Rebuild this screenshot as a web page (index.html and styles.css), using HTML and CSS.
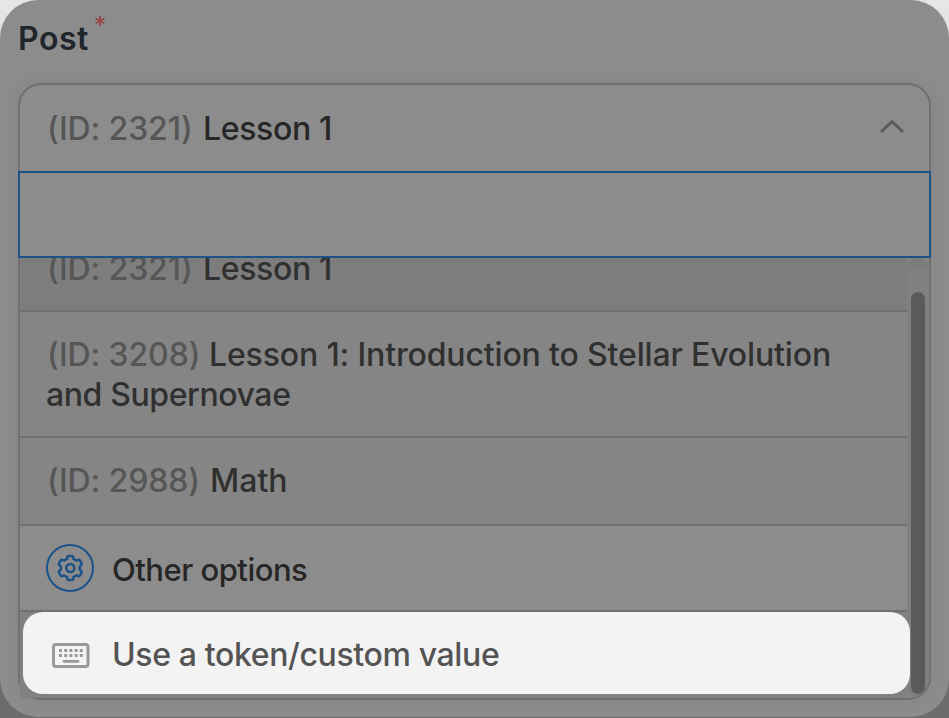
FILE: index.html
```
<!DOCTYPE html>
<html lang="en">
<head>
  <meta charset="UTF-8">
  <title>Post</title>
  <link rel="stylesheet" href="styles.css">
</head>
<body>
  <div class="panel">
    <div class="field-label"><span class="label-text">Post</span><span class="required">*</span></div>

    <div class="select">
      <div class="select-value">
        <div><span class="post-id">(ID: 2321)</span><span class="post-name lesson">Lesson 1</span></div>
        <svg class="chevron" width="24" height="14" viewBox="0 0 24 14">
          <path d="M2 12 12 2.5 22 12" fill="none" stroke="currentColor" stroke-width="3" stroke-linecap="round" stroke-linejoin="round"/>
        </svg>
      </div>

      <input class="search" type="text">

      <div class="dropdown">
        <div class="options">
          <div class="option selected">
            <div><span class="post-id">(ID: 2321)</span><span class="post-name lesson">Lesson 1</span></div>
          </div>
          <div class="option long">
            <div><span class="post-id wide">(ID: 3208)</span><span class="post-name intro">Lesson 1: Introduction to Stellar Evolution</span></div>
            <div><span class="post-name second-line">and Supernovae</span></div>
          </div>
          <div class="option">
            <div><span class="post-id wide">(ID: 2988)</span><span class="post-name math">Math</span></div>
          </div>
          <div class="option other">
            <svg class="gear" width="48" height="48" viewBox="0 0 48 48" fill="none" stroke="currentColor">
              <circle cx="24" cy="24" r="23" stroke-width="2"/>
              <g transform="translate(24.3 24)" stroke-width="2.5" stroke-linejoin="round">
                <circle r="4"/>
                <path d="M-1.6-12H1.6Q2.7-12 2.9-11L3.3-9Q4.8-8.5 6.1-7.4L8.2-8.1Q9.2-8.4 9.8-7.4L11.3-4.7Q11.8-3.7 11-3L9.4-1.6Q9.7 0 9.4 1.6L11 3Q11.8 3.7 11.3 4.7L9.8 7.4Q9.2 8.4 8.2 8.1L6.1 7.4Q4.8 8.5 3.3 9L2.9 11Q2.7 12 1.6 12H-1.6Q-2.7 12-2.9 11L-3.3 9Q-4.8 8.5-6.1 7.4L-8.2 8.1Q-9.2 8.4-9.8 7.4L-11.3 4.7Q-11.8 3.7-11 3L-9.4 1.6Q-9.7 0-9.4-1.6L-11-3Q-11.8-3.7-11.3-4.7L-9.8-7.4Q-9.2-8.4-8.2-8.1L-6.1-7.4Q-4.8-8.5-3.3-9L-2.9-11Q-2.7-12-1.6-12Z"/>
              </g>
            </svg>
            <span class="other-text">Other options</span>
          </div>
          <div class="token-wrap">
            <div class="token">
              <svg class="keyboard" width="38" height="26" viewBox="0 0 38 26">
                <rect x="1.5" y="1.5" width="34.5" height="22" rx="2.5" fill="none" stroke="currentColor" stroke-width="3"/>
                <path d="M7 7.5h24M7 12.5h24" fill="none" stroke="currentColor" stroke-width="3" stroke-dasharray="3 2.2"/>
                <path d="M12 18.3h14" stroke="currentColor" stroke-width="2.8" stroke-linecap="round"/>
              </svg>
              <span class="token-text">Use a token/custom value</span>
            </div>
          </div>
        </div>
        <div class="scrollbar"><div class="track"><div class="thumb"></div></div></div>
      </div>
    </div>
  </div>
</body>
</html>
```
FILE: styles.css
```
* {
  box-sizing: border-box;
}

body {
  margin: 0;
  height: 718px;
  overflow: hidden;
  background: linear-gradient(#e6e6e6 0, #e0e0e0 60px, #6c6c6c 640px, #6c6c6c);
  font-family: Inter, "Liberation Sans", sans-serif;
  font-size: 32px;
  font-weight: 450;
  line-height: 40px;
  color: #262626;
}

.panel {
  height: 717px;
  padding: 18px 18px 0;
  background: #8c8c8c;
  border-radius: 38px;
}

.field-label {
  display: flex;
  height: 65px;
  padding-top: 1px;
  color: #20262c;
  font-weight: 600;
}

.label-text {
  width: 76px;
  letter-spacing: 0.5px;
}

.required {
  margin-top: -13px;
  font-size: 24px;
  font-weight: 400;
  color: #983e3e;
}

.select {
  height: 617px;
  border: 2px solid #707070;
  border-radius: 23px;
  box-shadow: 0 0 18px rgba(0, 0, 0, 0.06);
}

.select-value {
  display: flex;
  justify-content: space-between;
  height: 86px;
  padding: 24px 25px 0 27px;
}

.chevron {
  margin-top: 10px;
  color: #5a5a5a;
}

.post-id {
  display: inline-block;
  width: 156px;
  letter-spacing: -0.1px;
  color: #565656;
}

.post-id.wide {
  width: 162px;
}

.post-name {
  color: #303030;
}

.lesson {
  letter-spacing: -0.35px;
}

.select-value .post-name {
  color: #262626;
}

.search {
  display: block;
  width: 913px;
  height: 87px;
  margin: 0 -2px;
  padding: 0 28px;
  border: 2px solid #1c5288;
  background: #8c8c8c;
  outline: none;
}

.dropdown {
  display: flex;
  height: 440px;
  border-radius: 0 0 21px 0;
  overflow: hidden;
}

.options {
  width: 887px;
  background: #818181;
}

.option {
  height: 88px;
  padding: 23px 0 0 27px;
  border-bottom: 2px solid #707070;
  background: #858585;
  white-space: nowrap;
}

.option.selected {
  height: 54px;
  padding-top: 0;
  background: #7d7d7d;
  overflow: hidden;
}

.option.selected div {
  margin-top: -9px;
}

.option.long {
  height: 126px;
}

.intro {
  letter-spacing: -0.15px;
}

.second-line {
  margin-left: -1px;
  letter-spacing: -0.4px;
}

.math {
  margin-left: 1px;
}

.option.other {
  display: flex;
  height: 86px;
  padding: 18px 0 0 26px;
  background: #8c8c8c;
}

.gear {
  color: #1c5288;
}

.other-text {
  margin: 6px 0 0 18px;
  font-size: 31px;
  letter-spacing: -0.5px;
}

.token-wrap {
  margin-right: -3px;
  padding-left: 3px;
}

.token {
  position: relative;
  display: flex;
  height: 82px;
  padding: 23px 0 0 29px;
  background: #f3f3f3;
  border-radius: 20px;
  color: #545454;
}

.keyboard {
  margin-top: 8px;
  color: #999;
}

.token-text {
  margin-left: 22px;
  letter-spacing: -0.37px;
}

.scrollbar {
  width: 22px;
  background: #858585;
}

.track {
  height: 440px;
  padding: 34px 0 0 4px;
  border-radius: 11px;
  background: linear-gradient(#787878, #808080 14px);
}

.thumb {
  width: 14px;
  height: 402px;
  border-radius: 7px;
  background: #5a5a5a;
}
```
